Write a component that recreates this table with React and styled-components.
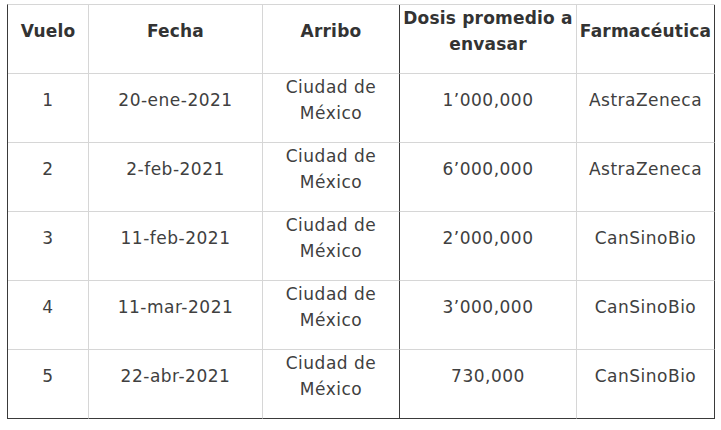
import React from "react";
import styled, { createGlobalStyle } from "styled-components";

const GlobalStyle = createGlobalStyle`
  html, body {
    margin: 0;
    padding: 0;
    background: #ffffff;
  }
  body {
    font-family: "DejaVu Sans", "Liberation Sans", sans-serif;
  }
`;

const Page = styled.div`
  padding: 4px 0 0 7px;
`;

const Table = styled.table`
  border-collapse: separate;
  border-spacing: 0;
  table-layout: fixed;
  width: 708px;
  border-left: 1px solid #3a3a3a;
  border-top: 1px solid #d6d6d6;
`;

const Cell = styled.td`
  box-sizing: border-box;
  height: 69px;
  padding: 0 0 16px;
  text-align: center;
  vertical-align: middle;
  white-space: nowrap;
  font-size: 17px;
  line-height: 26px;
  letter-spacing: 0.5px;
  color: #404040;
  border-bottom: 1px solid ${(p) => (p.$last ? "#3a3a3a" : "#d6d6d6")};
  border-right: 1px solid ${(p) => (p.$dark ? "#3a3a3a" : "#d6d6d6")};
`;

const Head = styled(Cell).attrs({ as: "th" })`
  font-weight: bold;
  color: #333333;
  letter-spacing: 0.2px;
`;

const Col = styled.col`
  width: ${(p) => p.$w}px;
`;

const columns = [
  { label: ["Vuelo"], w: 81 },
  { label: ["Fecha"], w: 174 },
  { label: ["Arribo"], w: 137, dark: true },
  { label: ["Dosis promedio a", "envasar"], w: 177 },
  { label: ["Farmacéutica"], w: 138, dark: true },
];

const rows = [
  ["1", "20-ene-2021", "1’000,000", "AstraZeneca"],
  ["2", "2-feb-2021", "6’000,000", "AstraZeneca"],
  ["3", "11-feb-2021", "2’000,000", "CanSinoBio"],
  ["4", "11-mar-2021", "3’000,000", "CanSinoBio"],
  ["5", "22-abr-2021", "730,000", "CanSinoBio"],
];

const Lines = ({ parts }) =>
  parts.map((t, i) => (
    <React.Fragment key={i}>
      {i > 0 && <br />}
      {t}
    </React.Fragment>
  ));

export default function App() {
  return (
    <>
      <GlobalStyle />
      <Page>
        <Table>
          <colgroup>
            {columns.map((c) => (
              <Col key={c.w + c.label[0]} $w={c.w} />
            ))}
          </colgroup>
          <thead>
            <tr>
              {columns.map((c) => (
                <Head key={c.label[0]} $dark={c.dark}>
                  <Lines parts={c.label} />
                </Head>
              ))}
            </tr>
          </thead>
          <tbody>
            {rows.map((r, i) => {
              const last = i === rows.length - 1;
              return (
                <tr key={r[0]}>
                  <Cell $last={last}>{r[0]}</Cell>
                  <Cell $last={last}>{r[1]}</Cell>
                  <Cell $last={last} $dark>
                    Ciudad de
                    <br />
                    México
                  </Cell>
                  <Cell $last={last}>{r[2]}</Cell>
                  <Cell $last={last} $dark>
                    {r[3]}
                  </Cell>
                </tr>
              );
            })}
          </tbody>
        </Table>
      </Page>
    </>
  );
}
